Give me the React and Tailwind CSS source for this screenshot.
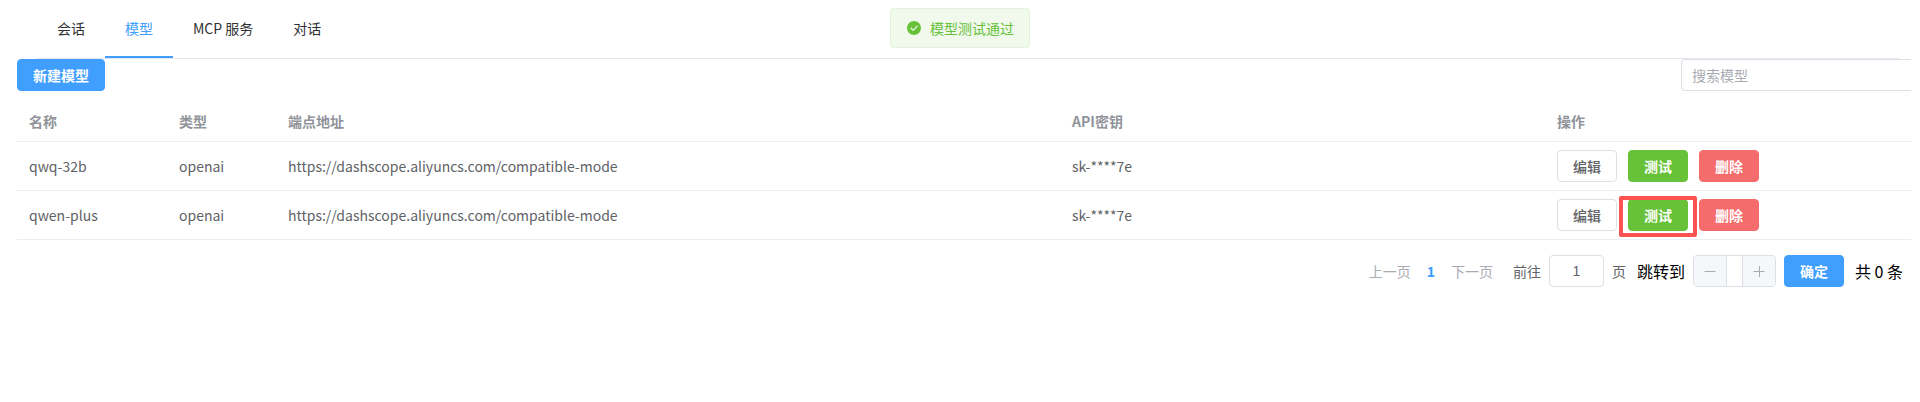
import { useState } from 'react'
import clsx from 'clsx'

const tabs = ['会话', '模型', 'MCP 服务', '对话']

const models = [
  { name: 'qwq-32b', type: 'openai', endpoint: 'https://dashscope.aliyuncs.com/compatible-mode', apiKey: 'sk-****7e' },
  { name: 'qwen-plus', type: 'openai', endpoint: 'https://dashscope.aliyuncs.com/compatible-mode', apiKey: 'sk-****7e', highlighted: true },
]

const buttonTypes = {
  default: 'border-[#dcdfe6] bg-white font-medium text-[#606266]',
  primary: 'border-[#409eff] bg-[#409eff] font-bold text-white',
  success: 'border-[#67c23a] bg-[#67c23a] font-bold text-white',
  danger: 'border-[#f56c6c] bg-[#f56c6c] font-bold text-white',
}

function Button({ type = 'default', children }) {
  return (
    <button
      type="button"
      className={clsx('flex h-8 items-center justify-center rounded border px-[15px] text-sm whitespace-nowrap', buttonTypes[type])}
    >
      {children}
    </button>
  )
}

function Message({ children }) {
  return (
    <div role="alert" className="absolute top-2 left-1/2 flex h-10 -translate-x-1/2 items-center gap-2 rounded border border-[#e1f3d8] bg-[#f0f9eb] px-[15px] text-[#67c23a]">
      <svg viewBox="0 0 1024 1024" className="size-4" fill="currentColor" aria-hidden="true">
        <path d="M512 64a448 448 0 1 1 0 896 448 448 0 0 1 0-896m-55.808 536.384-99.52-99.584a38.4 38.4 0 1 0-54.336 54.336l126.72 126.72a38.27 38.27 0 0 0 54.336 0l262.4-262.464a38.4 38.4 0 1 0-54.272-54.336z" />
      </svg>
      <span className="whitespace-nowrap">{children}</span>
    </div>
  )
}

function Tabs({ active, onChange }) {
  return (
    <nav className="mr-3 ml-5 flex border-b border-[#e4e7ed]">
      {tabs.map((tab) => (
        <button
          key={tab}
          type="button"
          onClick={() => onChange(tab)}
          className={clsx('h-[58px] border-b-2 px-5', tab === active ? 'border-[#409eff] text-[#409eff]' : 'border-transparent text-[#303133]')}
        >
          {tab}
        </button>
      ))}
    </nav>
  )
}

function ModelTable() {
  return (
    <table className="mt-[11px] w-full table-fixed border-collapse text-left">
      <colgroup>
        <col className="w-[150px]" />
        <col className="w-[109px]" />
        <col />
        <col className="w-[485px]" />
        <col className="w-[366px]" />
      </colgroup>
      <thead>
        <tr className="h-[39px] border-b border-[#ebeef5] text-[#909399]">
          {['名称', '类型', '端点地址', 'API密钥', '操作'].map((title) => (
            <th key={title} className="px-3 font-bold">{title}</th>
          ))}
        </tr>
      </thead>
      <tbody>
        {models.map((model) => (
          <tr key={model.name} className="border-b border-[#ebeef5]">
            <td className="px-3">{model.name}</td>
            <td className="px-3">{model.type}</td>
            <td className="px-3">{model.endpoint}</td>
            <td className="px-3">{model.apiKey}</td>
            <td className="px-3 py-2">
              <div className="flex gap-[11px]">
                <Button>编辑</Button>
                <div className="relative">
                  <Button type="success">测试</Button>
                  {model.highlighted && (
                    <div className="pointer-events-none absolute -inset-x-[9px] -top-[3px] -bottom-1.5 rounded-xs border-4 border-[#ff5252]" />
                  )}
                </div>
                <Button type="danger">删除</Button>
              </div>
            </td>
          </tr>
        ))}
      </tbody>
    </table>
  )
}

function Pagination() {
  return (
    <div className="mt-[15px] flex items-center justify-end pr-2">
      <div className="flex items-center gap-4">
        <button type="button" className="text-[#a8abb2]">上一页</button>
        <button type="button" className="font-bold text-[#409eff]">1</button>
        <button type="button" className="text-[#a8abb2]">下一页</button>
      </div>
      <label className="ml-5 flex items-center gap-2">
        前往
        <input
          defaultValue="1"
          className="h-8 w-[55px] rounded border border-[#dcdfe6] text-center font-['Liberation_Sans',sans-serif]"
        />
        页
      </label>
      <label htmlFor="jump" className="ml-[11px] text-base text-black">跳转到</label>
      <div className="ml-2 flex h-8 overflow-hidden rounded border border-[#dcdfe6] text-[#a8abb2]">
        <button type="button" aria-label="减少" className="flex w-8 items-center justify-center bg-[#f5f7fa]">
          <svg viewBox="0 0 14 14" className="size-3.5" stroke="currentColor" aria-hidden="true">
            <path d="M1.5 7.5h11" />
          </svg>
        </button>
        <input id="jump" className="w-[17px] border-x border-[#dcdfe6]" />
        <button type="button" aria-label="增加" className="flex w-8 items-center justify-center bg-[#f5f7fa]">
          <svg viewBox="0 0 14 14" className="size-3.5" stroke="currentColor" aria-hidden="true">
            <path d="M1.5 7.5h11M7.5 2v11" />
          </svg>
        </button>
      </div>
      <div className="mr-[11px] ml-2">
        <Button type="primary">确定</Button>
      </div>
      <span className="text-base text-black">共 0 条</span>
    </div>
  )
}

export default function App() {
  const [active, setActive] = useState('模型')

  return (
    <div className="relative min-h-screen bg-white pr-[9px] pl-[17px] font-['Noto_Sans_CJK_SC',sans-serif] text-sm text-[#606266]">
      <Message>模型测试通过</Message>
      <Tabs active={active} onChange={setActive} />
      <div className="flex justify-between">
        <Button type="primary">新建模型</Button>
        <input
          type="search"
          aria-label="搜索模型"
          placeholder="搜索模型"
          className="h-8 w-[230px] rounded-l border border-r-0 border-[#dcdfe6] px-2.5 placeholder:text-[#a8abb2]"
        />
      </div>
      <ModelTable />
      <Pagination />
    </div>
  )
}
